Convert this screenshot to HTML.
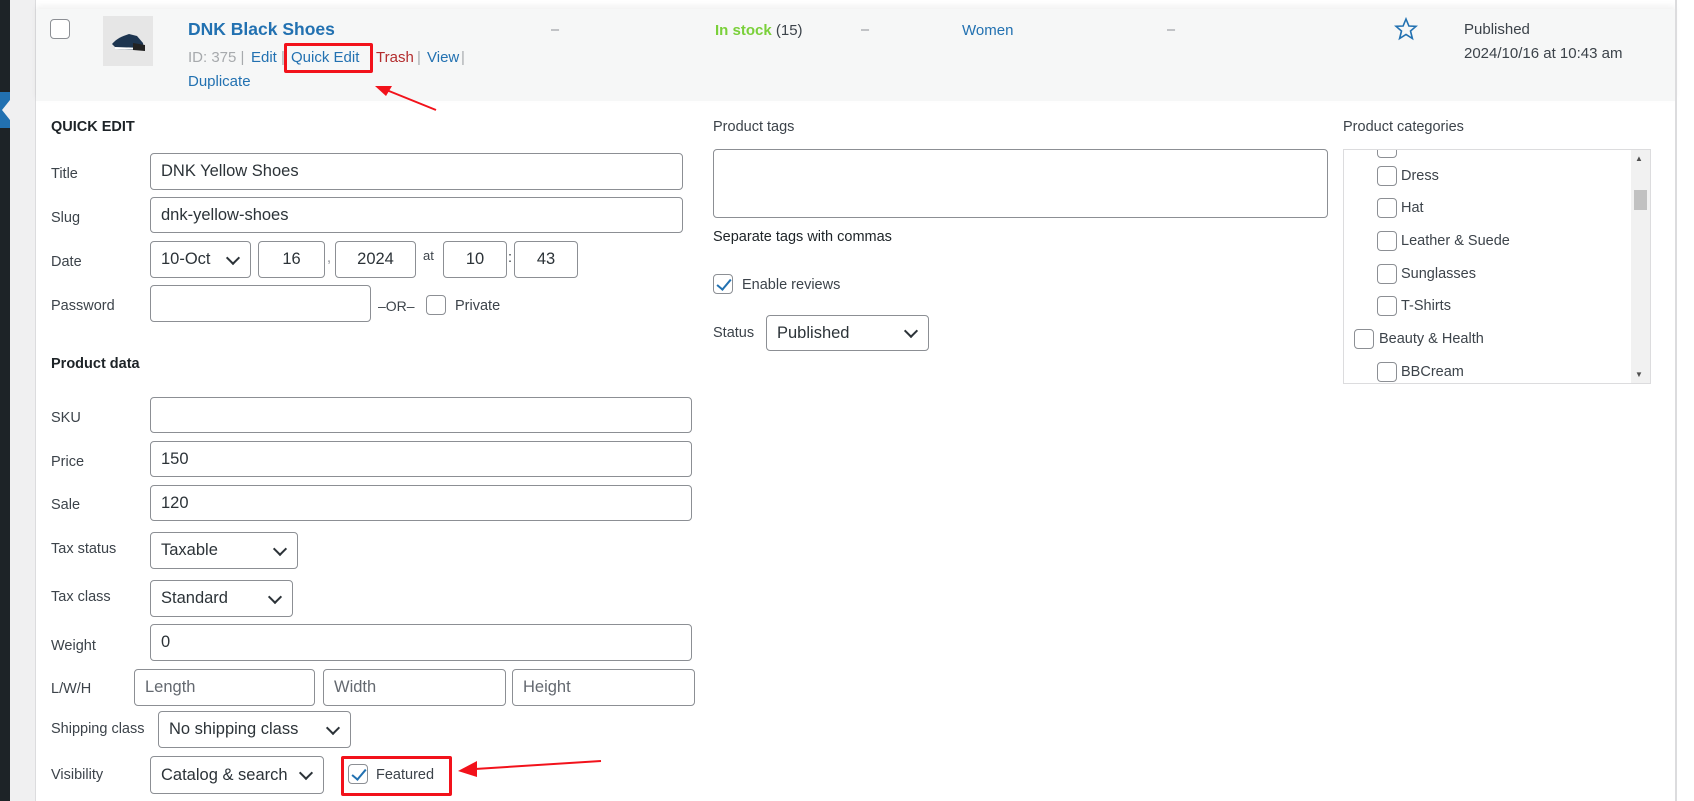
<!DOCTYPE html>
<html><head><meta charset="utf-8"><style>
*{box-sizing:border-box;margin:0;padding:0}
body{width:1694px;height:801px;overflow:hidden;background:#fff;font-family:"Liberation Sans",sans-serif;font-size:14.5px;color:#3c434a;position:relative}
.a{position:absolute;white-space:nowrap}
.in{position:absolute;border:1px solid #8c8f94;border-radius:4px;background:#fff;font-size:16.5px;color:#2c3338;padding-left:10px;display:flex;align-items:center}
.sel::after{content:"";position:absolute;right:12px;top:50%;width:8px;height:8px;border-right:2px solid #2c3338;border-bottom:2px solid #2c3338;transform:translateY(-70%) rotate(45deg)}
.cb{position:absolute;width:20px;height:20px;border:1px solid #8c8f94;border-radius:4px;background:#fff}
.lb{position:absolute;color:#3c434a;font-size:14.5px;white-space:nowrap}
.ck::after{content:"";position:absolute;left:6px;top:1px;width:6px;height:12px;border-right:2.5px solid #2271b1;border-bottom:2.5px solid #2271b1;transform:rotate(40deg)}
.blue{color:#2271b1}
.red{position:absolute;border:3px solid #f2121b;border-radius:2px}
.ra{position:absolute;top:49px;font-size:15px;white-space:nowrap}
.g{color:#a7aaad}
</style></head><body>
<div class="a" style="left:0;top:0;width:10px;height:801px;background:#1d2327"></div>
<div class="a" style="left:0;top:92px;width:10px;height:36px;background:#2271b1"></div>
<div class="a" style="left:2px;top:100px;width:0;height:0;border-top:10px solid transparent;border-bottom:10px solid transparent;border-right:8px solid #f0f0f1"></div>
<div class="a" style="left:10px;top:0;width:25px;height:801px;background:#f0f0f1"></div>
<div class="a" style="left:35px;top:0;width:1px;height:801px;background:#dcdcde"></div>
<div class="a" style="left:36px;top:9px;width:1639px;height:92px;background:#f6f7f7;box-shadow:0 -3px 6px rgba(0,0,0,.06)"></div>
<div class="a" style="left:1675px;top:0;width:2px;height:801px;background:#dcdcde"></div>

<div class="cb" style="left:50px;top:19px"></div>
<div class="a" style="left:103px;top:16px;width:50px;height:50px;background:#e6e6e6">
<svg width="50" height="50"><path d="M9 28 C14 22 20 20 26 18 L34 20 L40 27 L41 33 L30 34 L14 33Z" fill="#1d3550"/><path d="M12 32 L40 33" stroke="#fff" stroke-width="2"/><path d="M30 27 L42 29 L42 35 L30 34Z" fill="#222"/></svg></div>
<div class="a blue" style="left:188px;top:19px;font-size:17.5px;font-weight:bold">DNK Black Shoes</div>
<div class="ra g" style="left:188px">ID: 375 |</div>
<div class="ra blue" style="left:251px">Edit</div>
<div class="ra g" style="left:281px">|</div>
<div class="ra blue" style="left:291px">Quick Edit</div>
<div class="ra" style="left:376px;color:#b32d2e">Trash</div>
<div class="ra g" style="left:417px">|</div>
<div class="ra blue" style="left:427px">View</div>
<div class="ra g" style="left:461px">|</div>
<div class="a blue" style="left:188px;top:73px;font-size:15px">Duplicate</div>
<div class="red" style="left:284px;top:43px;width:89px;height:30px"></div>
<svg class="a" style="left:370px;top:80px" width="70" height="35"><path d="M66 30 L14 9" stroke="#f2121b" stroke-width="2"/><path d="M5 6 L22 6 L16 16Z" fill="#f2121b"/></svg>

<div class="a" style="left:551px;top:22px;color:#8c8f94">–</div>
<div class="a" style="left:715px;top:22px;font-size:15px"><b style="color:#7ad03a">In stock</b> (15)</div>
<div class="a" style="left:861px;top:22px;color:#8c8f94">–</div>
<div class="a blue" style="left:962px;top:22px;font-size:15px">Women</div>
<div class="a" style="left:1167px;top:22px;color:#8c8f94">–</div>
<svg class="a" style="left:1394px;top:17px" width="24" height="24" viewBox="0 0 24 24"><path d="M12 2 L14.9 9 L22 9.3 L16.5 14 L18.4 21.5 L12 17.4 L5.6 21.5 L7.5 14 L2 9.3 L9.1 9Z" fill="none" stroke="#2271b1" stroke-width="1.6"/></svg>
<div class="a" style="left:1464px;top:21px;font-size:15px">Published</div>
<div class="a" style="left:1464px;top:45px;font-size:15px">2024/10/16 at 10:43 am</div>

<div class="a" style="left:51px;top:119px;font-weight:bold;font-size:14.5px;color:#1d2327">QUICK EDIT</div>
<div class="lb" style="left:51px;top:166px">Title</div>
<div class="in" style="left:150px;top:153px;width:533px;height:37px">DNK Yellow Shoes</div>
<div class="lb" style="left:51px;top:210px">Slug</div>
<div class="in" style="left:150px;top:197px;width:533px;height:36px">dnk-yellow-shoes</div>
<div class="lb" style="left:51px;top:254px">Date</div>
<div class="in sel" style="left:150px;top:241px;width:101px;height:37px">10-Oct</div>
<div class="in" style="left:258px;top:241px;width:67px;height:37px;justify-content:center;padding:0">16</div>
<div class="a" style="left:327px;top:250px;color:#8c8f94">,</div>
<div class="in" style="left:335px;top:241px;width:81px;height:37px;justify-content:center;padding:0">2024</div>
<div class="a" style="left:423px;top:248px;font-size:13px">at</div>
<div class="in" style="left:443px;top:241px;width:64px;height:37px;justify-content:center;padding:0">10</div>
<div class="a" style="left:508px;top:250px">:</div>
<div class="in" style="left:514px;top:241px;width:64px;height:37px;justify-content:center;padding:0">43</div>
<div class="lb" style="left:51px;top:298px">Password</div>
<div class="in" style="left:150px;top:285px;width:221px;height:37px"></div>
<div class="a" style="left:378px;top:298px;font-size:14px">–OR–</div>
<div class="cb" style="left:426px;top:295px"></div>
<div class="lb" style="left:455px;top:298px">Private</div>

<div class="a" style="left:51px;top:356px;font-weight:bold;color:#1d2327">Product data</div>
<div class="lb" style="left:51px;top:410px">SKU</div>
<div class="in" style="left:150px;top:397px;width:542px;height:36px"></div>
<div class="lb" style="left:51px;top:454px">Price</div>
<div class="in" style="left:150px;top:441px;width:542px;height:36px">150</div>
<div class="lb" style="left:51px;top:497px">Sale</div>
<div class="in" style="left:150px;top:485px;width:542px;height:36px">120</div>
<div class="lb" style="left:51px;top:541px">Tax status</div>
<div class="in sel" style="left:150px;top:532px;width:148px;height:37px">Taxable</div>
<div class="lb" style="left:51px;top:589px">Tax class</div>
<div class="in sel" style="left:150px;top:580px;width:143px;height:37px">Standard</div>
<div class="lb" style="left:51px;top:638px">Weight</div>
<div class="in" style="left:150px;top:624px;width:542px;height:37px">0</div>
<div class="lb" style="left:51px;top:681px">L/W/H</div>
<div class="in" style="left:134px;top:669px;width:181px;height:37px;color:#646970">Length</div>
<div class="in" style="left:323px;top:669px;width:183px;height:37px;color:#646970">Width</div>
<div class="in" style="left:512px;top:669px;width:183px;height:37px;color:#646970">Height</div>
<div class="lb" style="left:51px;top:721px">Shipping class</div>
<div class="in sel" style="left:158px;top:711px;width:193px;height:37px">No shipping class</div>
<div class="lb" style="left:51px;top:767px">Visibility</div>
<div class="in sel" style="left:150px;top:756px;width:174px;height:38px">Catalog &amp; search</div>
<div class="cb ck" style="left:348px;top:764px"></div>
<div class="lb" style="left:376px;top:767px">Featured</div>
<div class="red" style="left:341px;top:756px;width:111px;height:40px"></div>
<svg class="a" style="left:455px;top:755px" width="150" height="30"><path d="M146 6 L20 14" stroke="#f2121b" stroke-width="2"/><path d="M3 16 L22 6 L22 22Z" fill="#f2121b"/></svg>

<div class="lb" style="left:713px;top:119px">Product tags</div>
<div class="in" style="left:713px;top:149px;width:615px;height:69px"></div>
<div class="lb" style="left:713px;top:229px;color:#1d2327">Separate tags with commas</div>
<div class="cb ck" style="left:713px;top:274px"></div>
<div class="lb" style="left:742px;top:277px">Enable reviews</div>
<div class="lb" style="left:713px;top:325px">Status</div>
<div class="in sel" style="left:766px;top:315px;width:163px;height:36px">Published</div>

<div class="lb" style="left:1343px;top:119px">Product categories</div>
<div class="a" style="left:1343px;top:149px;width:308px;height:235px;border:1px solid #dcdcde;overflow:hidden">
<div class="a" style="left:287px;top:0;width:19px;height:233px;background:#f1f1f1"></div>
<div class="a" style="left:290px;top:40px;width:13px;height:20px;background:#c1c1c1"></div>
<div class="a" style="left:291px;top:4px;font-size:8px;color:#505050">▲</div>
<div class="a" style="left:291px;top:220px;font-size:8px;color:#505050">▼</div>
<div class="cb" style="left:33px;top:-12px"></div>
<div class="cb" style="left:33px;top:16px"></div><div class="lb" style="left:57px;top:18px">Dress</div>
<div class="cb" style="left:33px;top:48px"></div><div class="lb" style="left:57px;top:50px">Hat</div>
<div class="cb" style="left:33px;top:81px"></div><div class="lb" style="left:57px;top:83px">Leather &amp; Suede</div>
<div class="cb" style="left:33px;top:114px"></div><div class="lb" style="left:57px;top:116px">Sunglasses</div>
<div class="cb" style="left:33px;top:146px"></div><div class="lb" style="left:57px;top:148px">T-Shirts</div>
<div class="cb" style="left:10px;top:179px"></div><div class="lb" style="left:35px;top:181px">Beauty &amp; Health</div>
<div class="cb" style="left:33px;top:212px"></div><div class="lb" style="left:57px;top:214px">BBCream</div>
</div>
</body></html>
